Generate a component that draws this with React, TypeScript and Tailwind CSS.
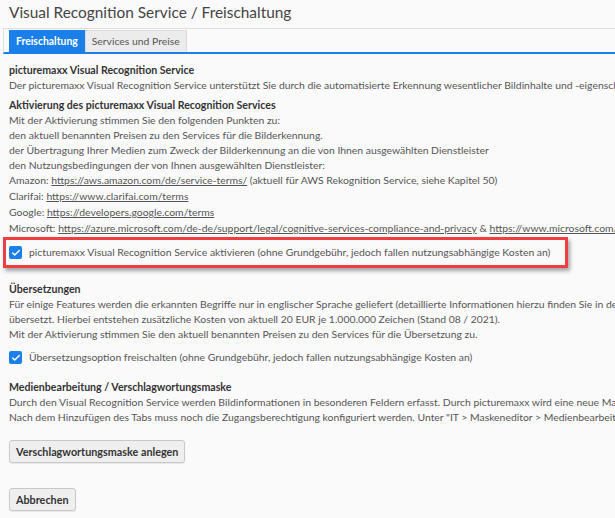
import { Check } from 'lucide-react';

const font = "font-['Lato','Open_Sans',sans-serif]";

function Box({ label }: { label: string }) {
  return (
    <label className="flex items-center gap-[7px] whitespace-nowrap">
      <span className="w-[13px] h-[13px] rounded-[2px] bg-[#1a7fe8] flex items-center justify-center shrink-0">
        <Check size={10} strokeWidth={3.5} className="text-white" />
      </span>
      <span>{label}</span>
    </label>
  );
}

function Link({ href }: { href: string }) {
  return <a className="underline text-[#555]">{href}</a>;
}

function Button({ children }: { children: string }) {
  return (
    <button className="h-[23px] px-[6px] rounded-[3px] border border-[#c8c8c8] bg-[#efefef] text-[#333] font-bold text-[10.8px] shadow-[0_1px_1px_rgba(0,0,0,0.08)]">
      {children}
    </button>
  );
}

export default function App() {
  return (
    <div className={`w-[615px] h-[518px] overflow-hidden bg-[#fafafa] text-[10.4px] leading-[15px] text-[#555] ${font}`}>
      <h1 className="pl-[9px] pt-[1px] text-[15.4px] leading-[22px] text-[#444]">
        Visual Recognition Service / Freischaltung
      </h1>

      <div className="mt-[5px] ml-[3px] h-[26px] border-t border-l border-[#dedede] border-b-2 border-b-[#1a7fe8] flex items-end pl-[5px]">
        <div className="h-[22px] px-[7px] flex items-center bg-[#1a7fe8] text-white font-bold">Freischaltung</div>
        <div className="h-[22px] px-[6px] flex items-center bg-[#ececec] border border-b-0 border-[#dcdcdc] text-[#555]">
          Services und Preise
        </div>
      </div>

      <div className="pl-[9px] pt-[9px] whitespace-nowrap">
        <div className="font-bold text-[#333] text-[10.6px]">picturemaxx Visual Recognition Service</div>
        <div className="h-[18px] overflow-hidden">
          <div>
            Der picturemaxx Visual Recognition Service unterstützt Sie durch die automatisierte Erkennung wesentlicher Bildinhalte und -eigenschaften.
          </div>
          <div>
            Die erkannten Begriffe werden als Stichwörter in den Feldern der Medienbearbeitung abgelegt und können dort bearbeitet werden.
          </div>
        </div>
        <div className="font-bold text-[#333] text-[10.6px] mt-[2px]">Aktivierung des picturemaxx Visual Recognition Services</div>
        <div>Mit der Aktivierung stimmen Sie den folgenden Punkten zu:</div>
        <div>den aktuell benannten Preisen zu den Services für die Bilderkennung.</div>
        <div>der Übertragung Ihrer Medien zum Zweck der Bilderkennung an die von Ihnen ausgewählten Dienstleister</div>
        <div>den Nutzungsbedingungen der von Ihnen ausgewählten Dienstleister:</div>
        <div>
          Amazon: <Link href="https://aws.amazon.com/de/service-terms/" /> (aktuell für AWS Rekognition Service, siehe Kapitel 50)
        </div>
        <div className="mt-[1px]">
          Clarifai: <Link href="https://www.clarifai.com/terms" />
        </div>
        <div className="mt-[1px]">
          Google: <Link href="https://developers.google.com/terms" />
        </div>
        <div className="mt-[1px]">
          Microsoft: <Link href="https://azure.microsoft.com/de-de/support/legal/cognitive-services-compliance-and-privacy" /> &amp;{' '}
          <Link href="https://www.microsoft.com/de-de/servicesagreement" />
        </div>

        <div className="mt-[1px] -ml-[6px] w-[565px] h-[31px] border-[3px] border-[#ef3e42] shadow-[2px_3px_4px_rgba(0,0,0,0.35)] flex items-center pl-[3px]">
          <Box label="picturemaxx Visual Recognition Service aktivieren (ohne Grundgebühr, jedoch fallen nutzungsabhängige Kosten an)" />
        </div>

        <div className="font-bold text-[#333] text-[10.6px] mt-[14px]">Übersetzungen</div>
        <div>
          Für einige Features werden die erkannten Begriffe nur in englischer Sprache geliefert (detaillierte Informationen hierzu finden Sie in der Dokumentation) und
        </div>
        <div>übersetzt. Hierbei entstehen zusätzliche Kosten von aktuell 20 EUR je 1.000.000 Zeichen (Stand 08 / 2021).</div>
        <div>Mit der Aktivierung stimmen Sie den aktuell benannten Preisen zu den Services für die Übersetzung zu.</div>
        <div className="mt-[8px]">
          <Box label="Übersetzungsoption freischalten (ohne Grundgebühr, jedoch fallen nutzungsabhängige Kosten an)" />
        </div>

        <div className="font-bold text-[#333] text-[10.6px] mt-[15px]">Medienbearbeitung / Verschlagwortungsmaske</div>
        <div>
          Durch den Visual Recognition Service werden Bildinformationen in besonderen Feldern erfasst. Durch picturemaxx wird eine neue Maske angelegt.
        </div>
        <div>
          Nach dem Hinzufügen des Tabs muss noch die Zugangsberechtigung konfiguriert werden. Unter "IT &gt; Maskeneditor &gt; Medienbearbeitung"
        </div>

        <div className="mt-[15px]">
          <Button>Verschlagwortungsmaske anlegen</Button>
        </div>
        <div className="mt-[25px]">
          <Button>Abbrechen</Button>
        </div>
      </div>
    </div>
  );
}
